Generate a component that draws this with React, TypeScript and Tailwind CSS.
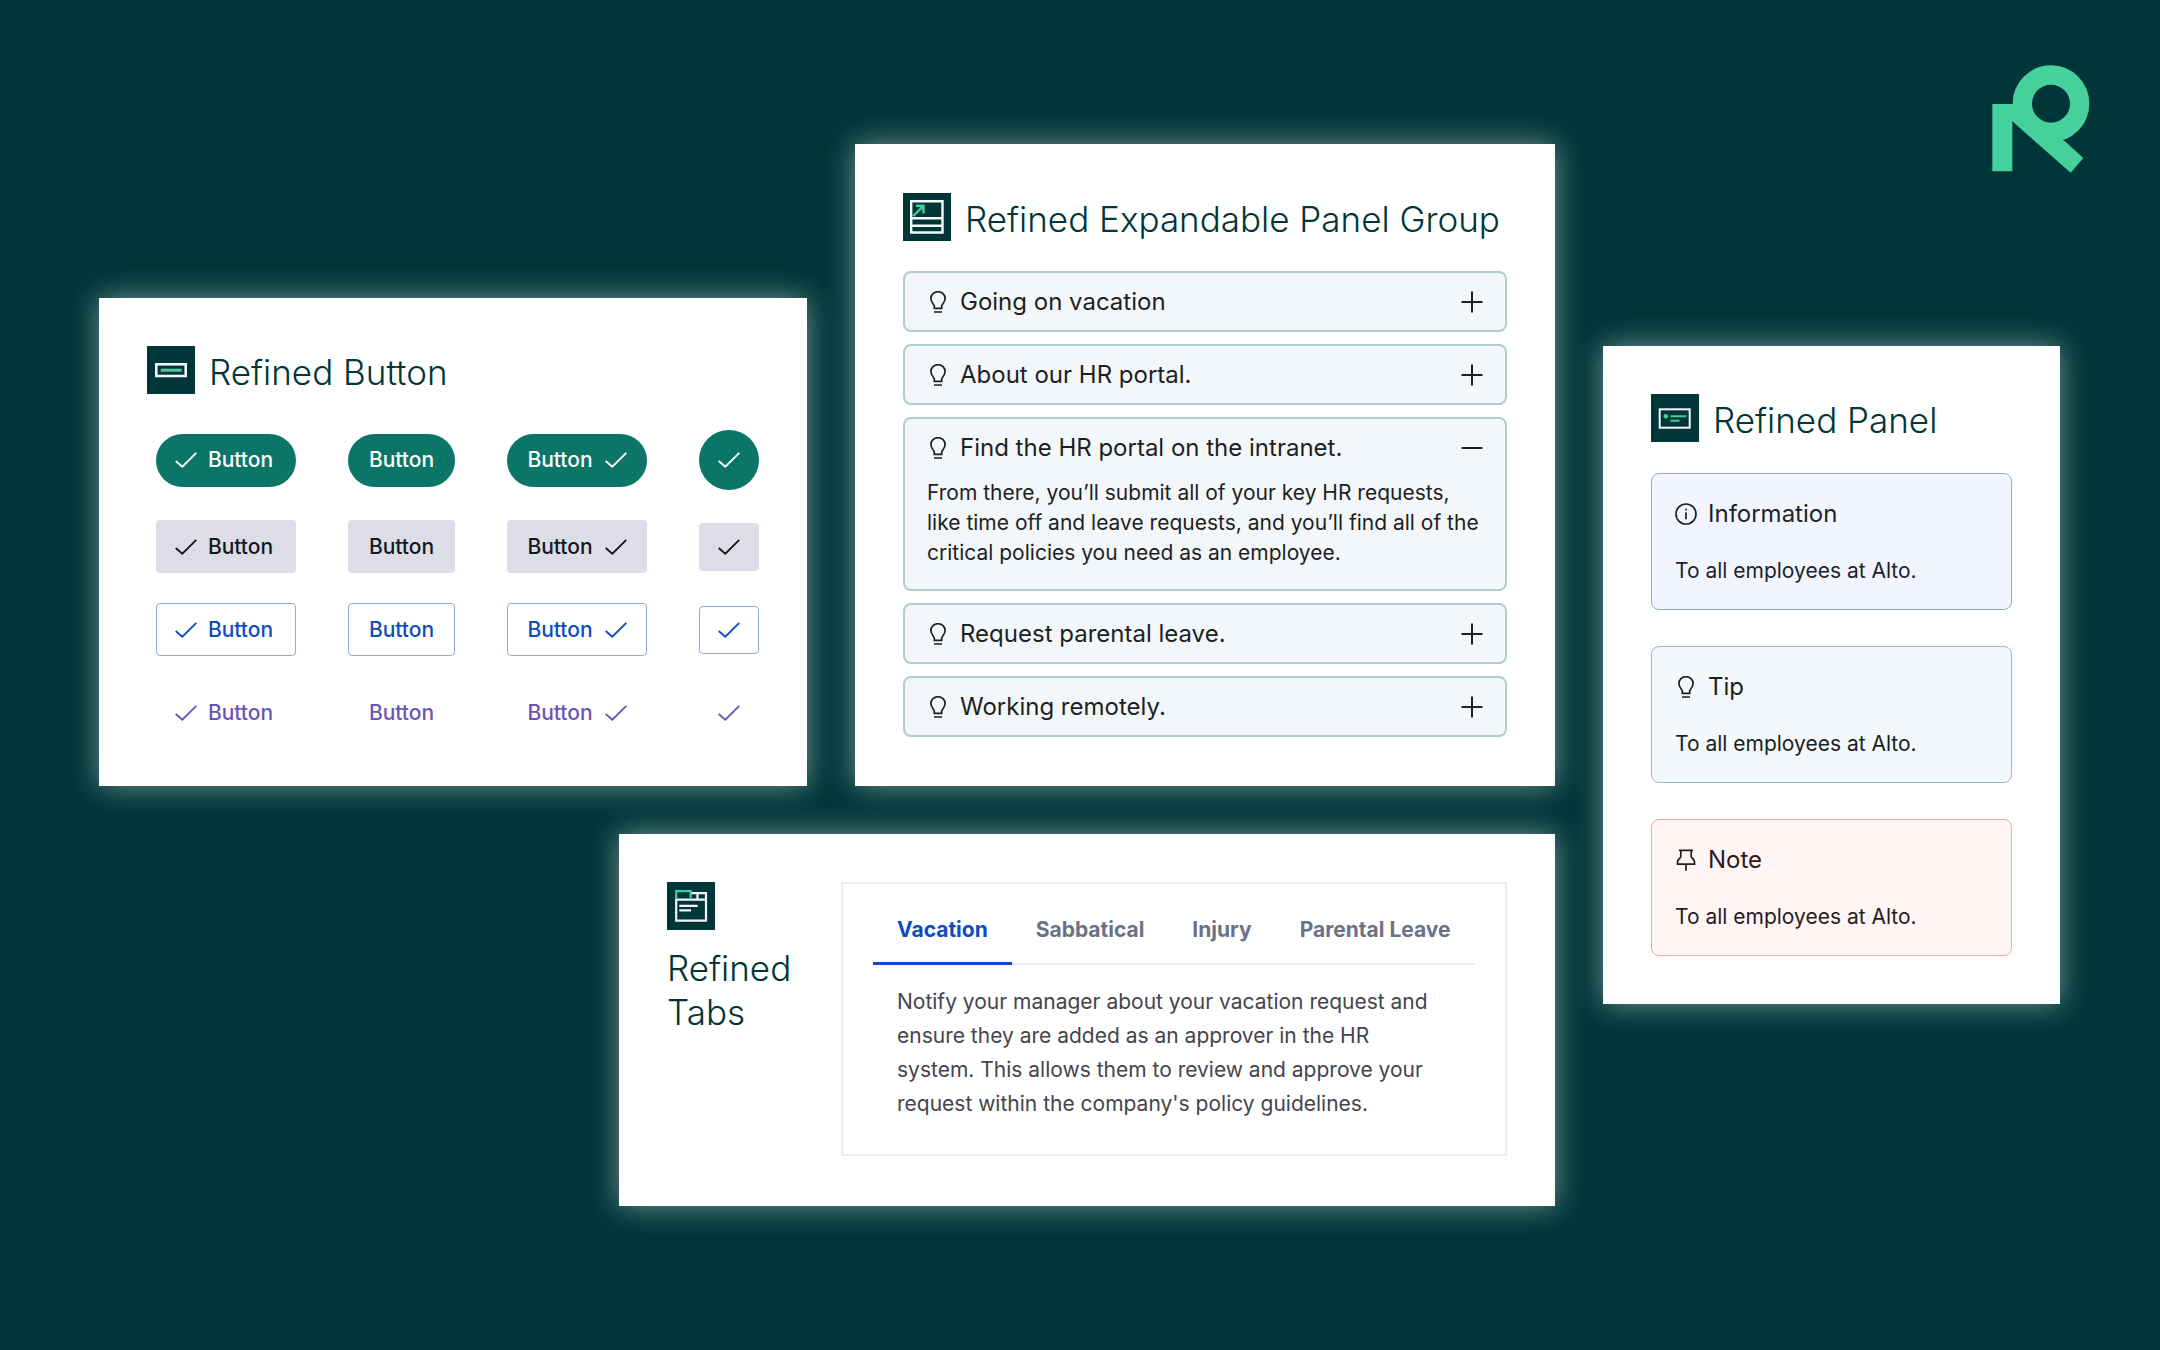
import { useState } from 'react';
import clsx from 'clsx';

const BUTTON_STYLES = [
  { name: 'primary', label: 'rounded-full bg-[#0b7667] text-white', icon: 'h-[60px] rounded-full bg-[#0b7667] text-white' },
  { name: 'secondary', label: 'rounded bg-[#dcdde6] text-[#15171f]', icon: 'h-12 rounded bg-[#dcdde6] text-[#15171f]' },
  {
    name: 'outline',
    label: 'rounded border border-[#8faae0] bg-white text-[#0b4cc0]',
    icon: 'h-12 rounded border border-[#8faae0] bg-white text-[#0b4cc0]',
  },
  { name: 'link', label: 'text-[#6a55b3]', icon: 'h-12 text-[#6a55b3]' },
];

const QUESTIONS = [
  { title: 'Going on vacation' },
  { title: 'About our HR portal.' },
  {
    title: 'Find the HR portal on the intranet.',
    body: 'From there, you’ll submit all of your key HR requests, like time off and leave requests, and you’ll find all of the critical policies you need as an employee.',
  },
  { title: 'Request parental leave.' },
  { title: 'Working remotely.' },
];

const TABS = [
  {
    title: 'Vacation',
    body: "Notify your manager about your vacation request and ensure they are added as an approver in the HR system. This allows them to review and approve your request within the company's policy guidelines.",
  },
  { title: 'Sabbatical', body: '' },
  { title: 'Injury', body: '' },
  { title: 'Parental Leave', body: '' },
];

const NOTICES = [
  { title: 'Information', icon: <InfoIcon />, className: 'border-[#8faae0] bg-[#f2f5ff] text-[#1d1f2b]' },
  { title: 'Tip', icon: <BulbIcon />, className: 'border-[#97bebc] bg-[#f3f8fa] text-[#1a1f22]' },
  { title: 'Note', icon: <PinIcon />, className: 'border-[#f5aba2] bg-[#fff5f5] text-[#2b1a1d]' },
];

export default function App() {
  return (
    <main className="relative flex min-h-screen items-center gap-12 bg-[#003638] py-12 pr-[100px] pl-[99px] font-['Inter','Liberation_Sans',sans-serif]">
      <Logo />
      <div className="flex flex-1 flex-col gap-12">
        <div className="grid grid-cols-[708fr_700fr] items-end gap-12">
          <ButtonCard />
          <ExpandableCard />
        </div>
        <TabsCard />
      </div>
      <PanelCard />
    </main>
  );
}

function ButtonCard() {
  return (
    <section className="min-w-0 bg-white p-12 pb-[47px] shadow-[0_0_28px_rgba(255,255,255,0.45)]">
      <CardHeader title="Refined Button" icon={<ButtonGlyph />} />
      <div className="mt-9 grid grid-cols-[140px_107px_140px_60px] items-center justify-between gap-y-[30px] pl-[9px] text-[21px] font-medium">
        {BUTTON_STYLES.map((style) => (
          <ButtonRow key={style.name} label={style.label} icon={style.icon} />
        ))}
      </div>
    </section>
  );
}

function ButtonRow({ label, icon }: { label: string; icon: string }) {
  const base = 'flex items-center justify-center';
  return (
    <>
      <button className={clsx(base, 'h-[53px] gap-[11px] pr-1', label)}>
        <CheckIcon />
        Button
      </button>
      <button className={clsx(base, 'h-[53px]', label)}>Button</button>
      <button className={clsx(base, 'h-[53px] gap-3', label)}>
        Button
        <CheckIcon />
      </button>
      <button className={clsx(base, icon)} aria-label="Confirm">
        <CheckIcon />
      </button>
    </>
  );
}

function ExpandableCard() {
  const [open, setOpen] = useState(2);

  return (
    <section className="min-w-0 bg-white px-12 py-[49px] shadow-[0_0_28px_rgba(255,255,255,0.45)]">
      <CardHeader title="Refined Expandable Panel Group" icon={<ExpandGlyph />} />
      <div className="mt-[30px] flex flex-col gap-3">
        {QUESTIONS.map((item, i) => (
          <div key={item.title} className="rounded-lg border-2 border-[#b0cecd] bg-[#f3f7f9] px-[22px] text-[#1d1f24]">
            <button
              className="flex h-[57px] w-full items-center gap-[11px] text-left text-2xl"
              aria-expanded={open === i}
              onClick={() => setOpen(open === i ? -1 : i)}
            >
              <BulbIcon />
              <span className="flex-1">{item.title}</span>
              <ToggleIcon open={open === i} />
            </button>
            {open === i && item.body && <p className="pt-0.5 pb-[21px] text-[21px] leading-[30px]">{item.body}</p>}
          </div>
        ))}
      </div>
    </section>
  );
}

function TabsCard() {
  const [active, setActive] = useState(0);

  return (
    <section className="flex w-[936px] justify-between self-end bg-white p-12 pb-[50px] shadow-[0_0_28px_rgba(255,255,255,0.45)]">
      <div className="w-36">
        <TabsGlyph />
        <h2 className="mt-4 text-[35px] leading-[44px] font-[350] text-[#003638]">Refined Tabs</h2>
      </div>
      <div className="w-[666px] border-2 border-[#ebebf1] px-[30px] pb-[33px]">
        <div role="tablist" className="flex border-b-2 border-[#ebebf1] text-[21px] leading-8">
          {TABS.map((tab, i) => (
            <button
              key={tab.title}
              role="tab"
              aria-selected={active === i}
              onClick={() => setActive(i)}
              className={clsx(
                '-mb-0.5 border-b-[3px] px-6 pt-[30px] pb-4 font-bold',
                active === i ? 'border-[#0b4cc0] text-[#0b4cc0]' : 'border-transparent text-[#6b7288]'
              )}
            >
              {tab.title}
            </button>
          ))}
        </div>
        <p className="px-6 pt-5 text-[21px] leading-[34px] text-[#44444d]">{TABS[active].body}</p>
      </div>
    </section>
  );
}

function PanelCard() {
  return (
    <section className="w-[457px] bg-white p-12 shadow-[0_0_28px_rgba(255,255,255,0.45)]">
      <CardHeader title="Refined Panel" icon={<PanelGlyph />} />
      <div className="mt-[31px] flex flex-col gap-9">
        {NOTICES.map((notice) => (
          <div key={notice.title} className={clsx('rounded-lg border px-[23px] pt-6 pb-[23px]', notice.className)}>
            <h3 className="flex items-center gap-[11px] text-2xl leading-8">
              {notice.icon}
              {notice.title}
            </h3>
            <p className="mt-[26px] text-[21px] leading-[30px]">To all employees at Alto.</p>
          </div>
        ))}
      </div>
    </section>
  );
}

function CardHeader({ title, icon }: { title: string; icon: React.ReactNode }) {
  return (
    <div className="flex items-center gap-[14px] text-[#003638]">
      {icon}
      <h2 className="pt-1 text-[35px] leading-[44px] font-[350] whitespace-nowrap">{title}</h2>
    </div>
  );
}

function CheckIcon() {
  return (
    <svg className="h-4 w-[22px] shrink-0" viewBox="0 0 22 16" fill="none" stroke="currentColor" strokeWidth="1.8">
      <path d="M0.7 9 7.3 14.7 21.3 0.8" />
    </svg>
  );
}

function ToggleIcon({ open }: { open: boolean }) {
  return (
    <svg className="size-[22px] shrink-0" viewBox="0 0 22 22" fill="none" stroke="currentColor" strokeWidth="2">
      <path d={open ? 'M0.5 11h21' : 'M0.5 11h21M11 0.5v21'} />
    </svg>
  );
}

function BulbIcon() {
  return (
    <svg className="size-[22px] shrink-0" viewBox="0 0 22 22" fill="none" stroke="currentColor" strokeWidth="1.7">
      <path d="M7.3 17.3V15c0-1.6-3.4-3.4-3.4-7.4a7.1 6.9 0 0 1 14.2 0c0 4-3.4 5.8-3.4 7.4v2.3zM7 21h8" />
    </svg>
  );
}

function InfoIcon() {
  return (
    <svg className="size-[22px] shrink-0" viewBox="0 0 22 22" fill="none" stroke="currentColor" strokeWidth="1.7">
      <circle cx="11" cy="11" r="10" />
      <path d="M11 9.3v7M11 5.8v1.8" />
    </svg>
  );
}

function PinIcon() {
  return (
    <svg className="size-[22px] shrink-0" viewBox="0 0 22 22" fill="none" stroke="currentColor" strokeWidth="1.7">
      <path d="M4 1.3h14M5.8 1.3v6.2c0 2-3.3 2.2-3.3 5.5v2.2h17V13c0-3.3-3.3-3.5-3.3-5.5V1.3M11 15.2v6.6" />
    </svg>
  );
}

function ButtonGlyph() {
  return (
    <svg className="size-12 shrink-0" viewBox="0 0 48 48" fill="none" strokeWidth="2.6">
      <rect width="48" height="48" fill="#003638" />
      <rect x="9.3" y="18.3" width="29.4" height="11.7" stroke="#f4f5fc" />
      <path d="M13.7 24.2h21" stroke="#4cc9a0" strokeWidth="3" />
    </svg>
  );
}

function ExpandGlyph() {
  return (
    <svg className="size-12 shrink-0" viewBox="0 0 48 48" fill="none" strokeWidth="2.4">
      <rect width="48" height="48" fill="#003638" />
      <path d="M8.2 8.2h31.3v31.3H8.2zM8.2 25.2h31.3M8.2 32.7h31.3" stroke="#f4fbfa" />
      <path d="M10.3 23 20.5 12.8M12.8 12.8h7.7v7.7" stroke="#3fd09b" />
    </svg>
  );
}

function TabsGlyph() {
  return (
    <svg className="size-12 shrink-0" viewBox="0 0 48 48" fill="none" strokeWidth="2.2">
      <rect width="48" height="48" fill="#003638" />
      <path d="M24 11.2h15v27.5H9.2V17.7H39M30.5 11v6M12.3 23.9h18.4M12.3 28.3h11.7" stroke="#f4f5fc" />
      <path d="M9.2 17V9.1h14.5V16" stroke="#3fd09b" />
    </svg>
  );
}

function PanelGlyph() {
  return (
    <svg className="size-12 shrink-0" viewBox="0 0 48 48" fill="none" strokeWidth="2">
      <rect width="48" height="48" fill="#003638" />
      <rect x="8.7" y="15.3" width="30" height="18.4" stroke="#f4f5fc" />
      <circle cx="14.8" cy="22.3" r="2.3" fill="#3fd09b" />
      <path d="M19.5 22.3h16M19.5 26.8h9" stroke="#3fd09b" />
    </svg>
  );
}

function Logo() {
  return (
    <svg className="absolute top-[65px] right-[70px] h-[108px] w-[98px]" viewBox="97 73 294 324" fill="#45d09c" role="img" aria-label="Refined">
      <circle cx="274" cy="189" r="86" fill="none" stroke="#45d09c" strokeWidth="58" />
      <path d="M98 190H180V230L240 270 314 300 371 352 333 396 158 242V392H98Z" />
    </svg>
  );
}
